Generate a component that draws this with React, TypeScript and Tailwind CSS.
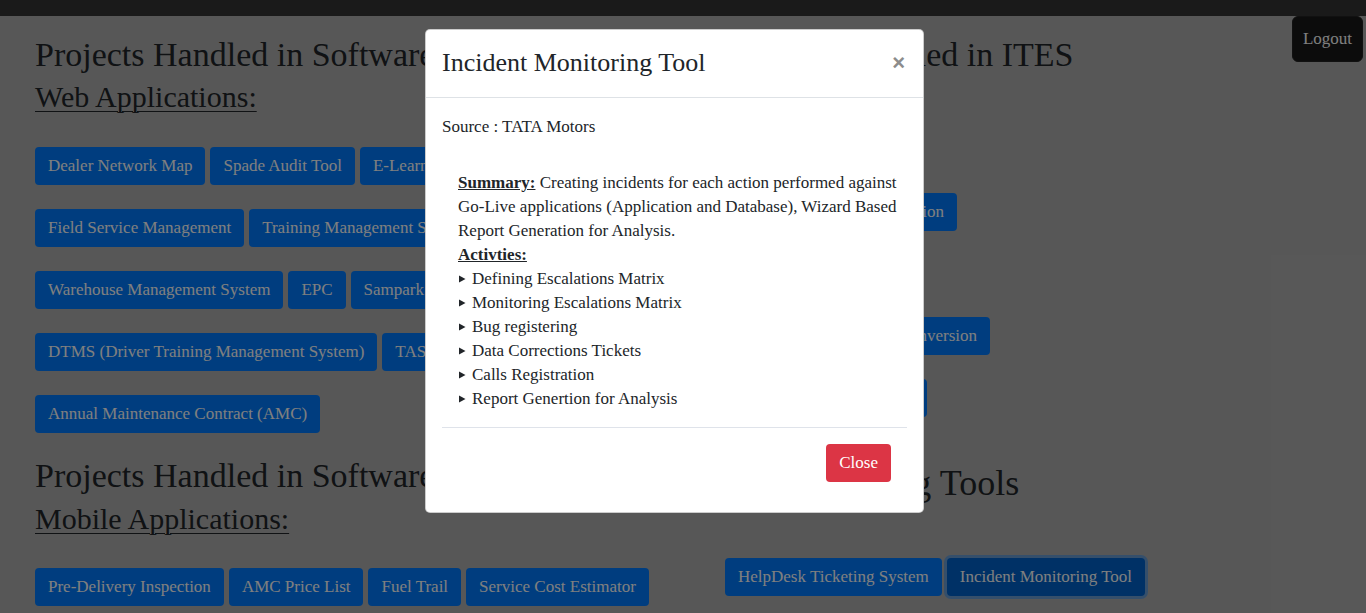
import React from "react";

const serif = { fontFamily: '"Liberation Serif", "Times New Roman", serif' };

function ProjectButton({
  label,
  focused = false,
  className = "",
}: {
  label: string;
  focused?: boolean;
  className?: string;
}) {
  return (
    <button
      className={`h-[38px] shrink-0 whitespace-nowrap rounded-[4px] px-[13px] text-[17px] leading-[24px] text-white ${
        focused ? "bg-[#0062cc] ring-[3px] ring-[#268fff]/50" : "bg-[#007bff]"
      } ${className}`}
    >
      {label}
    </button>
  );
}

function ButtonRow({ items }: { items: string[] }) {
  return (
    <div className="flex gap-[5px]">
      {items.map((item) => (
        <ProjectButton key={item} label={item} />
      ))}
    </div>
  );
}

const webRows = [
  ["Dealer Network Map", "Spade Audit Tool", "E-Learning", "Dealer Portal"],
  ["Field Service Management", "Training Management System"],
  ["Warehouse Management System", "EPC", "Sampark", "Vendor Portal"],
  ["DTMS (Driver Training Management System)", "TAS"],
  ["Annual Maintenance Contract (AMC)"],
];

const mobileApps = ["Pre-Delivery Inspection", "AMC Price List", "Fuel Trail", "Service Cost Estimator"];

const activities = [
  "Defining Escalations Matrix",
  "Monitoring Escalations Matrix",
  "Bug registering",
  "Data Corrections Tickets",
  "Calls Registration",
  "Report Genertion for Analysis",
];

function Bullet() {
  return (
    <svg width="7" height="8" viewBox="0 0 7 8" className="ml-[1px] mr-[6px] inline-block">
      <path d="M0 0.5 L6.5 4 L0 7.5 Z" fill="#212529" />
    </svg>
  );
}

function Modal() {
  return (
    <div className="absolute left-[425px] top-[29px] w-[499px] rounded-[5px] border border-black/20 bg-white text-[#212529]">
      <div className="flex items-start justify-between border-b border-[#dee2e6] px-4 pb-4 pt-[15px]">
        <h5 className="text-[26px] font-normal leading-[36px]">Incident Monitoring Tool</h5>
        <span
          className="mr-[2px] mt-[6px] text-[22px] font-bold leading-[24px] text-[#8c8c8c]"
          style={{ fontFamily: '"Liberation Sans", Arial, sans-serif' }}
        >
          ×
        </span>
      </div>
      <div className="px-4 pb-[14px] pt-[17px] text-[17px] leading-[24px]">
        <p>Source : TATA Motors</p>
        <div className="mt-[32px] whitespace-nowrap px-4">
          <p>
            <b className="underline">Summary:</b> Creating incidents for each action performed against
            <br />
            Go-Live applications (Application and Database), Wizard Based
            <br />
            Report Generation for Analysis.
          </p>
          <p>
            <b className="underline">Activties:</b>
          </p>
          <ul>
            {activities.map((a) => (
              <li key={a} className="flex items-center">
                <Bullet />
                {a}
              </li>
            ))}
          </ul>
        </div>
        <hr className="mt-4 border-t border-[#dfe3ea]" />
        <div className="flex justify-end p-4">
          <button className="h-[38px] rounded-[4px] bg-[#dc3545] px-[13px] text-[17px] text-white">Close</button>
        </div>
      </div>
    </div>
  );
}

export default function App() {
  return (
    <div className="relative h-screen overflow-hidden bg-[#afafaf] text-[#212529]" style={serif}>
      <div className="h-[16px] bg-[#343434]" />
      <div className="flex pl-[35px] pt-[19px]">
        {/* left column */}
        <div className="w-[690px] shrink-0">
          <h2 className="text-[34px] leading-[40px]">Projects Handled in Software Development</h2>
          <h3 className="mt-[4px] text-[30px] leading-[36px] underline decoration-1 underline-offset-4">
            Web Applications:
          </h3>
          <div className="mt-[32px] flex flex-col gap-[24px] overflow-hidden">
            {webRows.map((row, i) => (
              <ButtonRow key={i} items={row} />
            ))}
          </div>
          <h2 className="mt-[23px] text-[34px] leading-[40px]">Projects Handled in Software Development</h2>
          <h3 className="mt-[5px] text-[30px] leading-[36px] underline decoration-1 underline-offset-4">
            Mobile Applications:
          </h3>
          <div className="mt-[31px] flex flex-wrap gap-[5px]">
            {mobileApps.map((m) => (
              <ProjectButton key={m} label={m} />
            ))}
          </div>
        </div>

        {/* right column */}
        <div className="flex-1">
          <h2 className="text-[34px] leading-[40px]">Projects Handled in ITES</h2>
          <div className="mt-[56px] flex flex-col items-start gap-[24px]">
            <ProjectButton label="MIS Reports" />
            <ProjectButton label="Document Data Digitization" className="w-[232px] text-right" />
            <ProjectButton label="Data Entry Services" />
            <ProjectButton label="Legacy Document Conversion" className="w-[265px] text-right" />
            <ProjectButton label="Medical Transcription" className="w-[202px]" />
          </div>
          <h2 className="mt-[45px] text-[36px] leading-[42px]">IT Monitoring Tools</h2>
          <div className="mt-[54px] flex gap-[5px]">
            <ProjectButton label="HelpDesk Ticketing System" />
            <ProjectButton label="Incident Monitoring Tool" focused />
          </div>
        </div>
      </div>

      <button className="absolute right-[3px] top-[16px] h-[46px] w-[71px] rounded-[6px] border border-[#222] bg-[#181818] text-[17px] text-white">
        Logout
      </button>

      {/* backdrop */}
      <div className="absolute inset-0 bg-black/50" />
      <Modal />
    </div>
  );
}
